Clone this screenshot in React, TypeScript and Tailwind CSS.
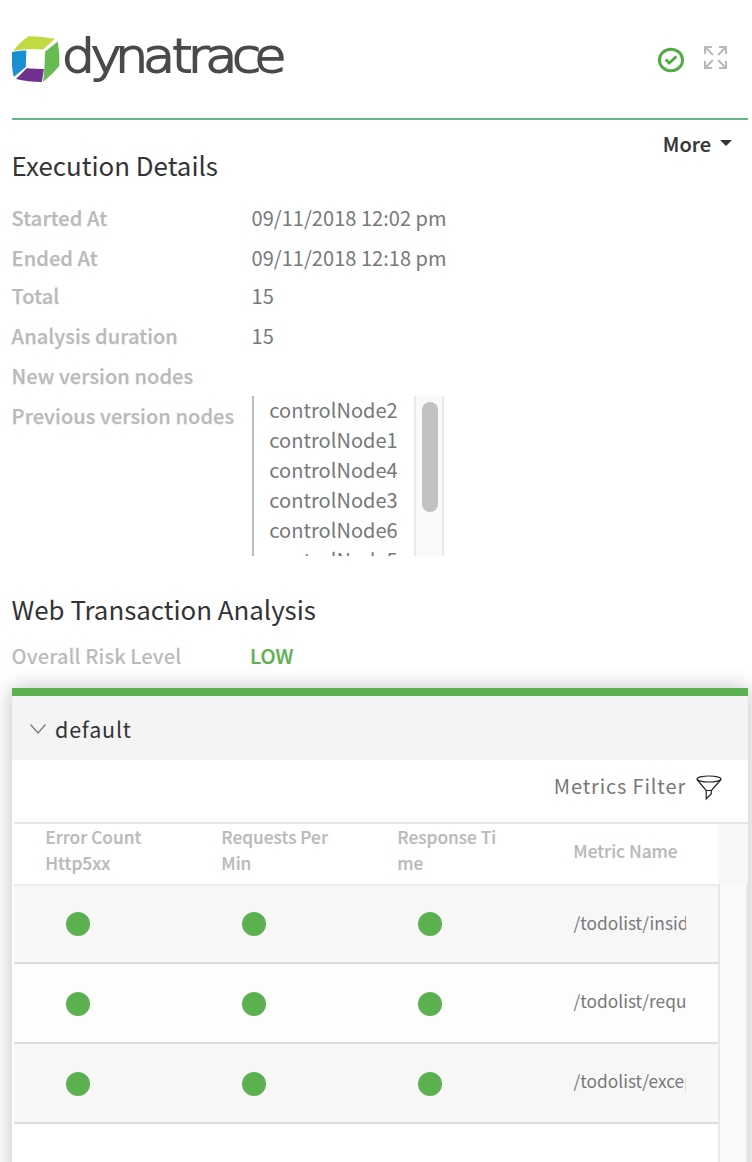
import React from "react";

const nodes = ["controlNode2", "controlNode1", "controlNode4", "controlNode3", "controlNode6", "controlNode5"];

const metrics = [
  { name: "/todolist/inside", height: "h-[78px]", top: "pt-[26px]", textTop: "pt-[23px]", bg: "bg-[#f7f7f7]" },
  { name: "/todolist/request", height: "h-[80px]", top: "pt-[28px]", textTop: "pt-[23px]", bg: "bg-[#fdfdfd]" },
  { name: "/todolist/except", height: "h-[80px]", top: "pt-[28px]", textTop: "pt-[23px]", bg: "bg-[#f7f7f7]" },
];

function Logo() {
  return (
    <svg width="280" height="62" viewBox="0 0 280 62" className="block" aria-label="dynatrace">
      <path d="M16.5 8.3Q29 8 43 10.8L31 21.6Q15 20 1.3 22.8Q8 14 16.5 8.3Z" fill="#c3d941" />
      <path d="M0 24Q7 22 14.3 22.5L13.8 39L1.8 49Q-1 37 0 24Z" fill="#1a90d2" />
      <path d="M45.8 13.5Q48 26 47.3 38Q40 47 31.2 53.7Q32.8 38 33.2 23.4Z" fill="#66bc50" />
      <path d="M14.7 40.3Q23 41 31.9 41L29.9 54Q16 54 4 51Z" fill="#70308f" />
      <text
        transform="scale(1.12 1)"
        x="44.5 70.1 91.9 117 142.6 157 172.6 196.4 216.2"
        y="44.1"
        fill="#4a4a4c"
        stroke="#4a4a4c"
        strokeWidth="1.9"
        className="font-['DejaVu_Sans',sans-serif] text-[47px] font-extralight"
      >
        dynatrace
      </text>
    </svg>
  );
}

function Field({ label, children, height = "h-[40px]" }: { label: string; children?: React.ReactNode; height?: string }) {
  return (
    <div className={`flex items-start text-[20px] leading-[40px] ${height}`}>
      <div className="w-[240px] shrink-0 whitespace-nowrap font-medium tracking-[0.08px] text-[#b9babb] [-webkit-text-stroke:0.25px_#b9babb] -indent-[0.4px]">{label}</div>
      <div className="whitespace-nowrap tracking-[0.03px] text-[#77787a] -indent-[0.4px]">{children}</div>
    </div>
  );
}

function Dot() {
  return (
    <div className="w-[176px] pl-[52px]">
      <div className="size-6 rounded-full bg-[#5bb04f]" />
    </div>
  );
}

export default function App() {
  return (
    <div className="h-[1162px] w-[752px] overflow-hidden bg-white pl-3 pr-1 font-['Noto_Sans_CJK_SC',sans-serif] text-[#333436]">
      <header className="flex h-[120px] items-start justify-between border-b-2 border-[#63b688] pt-[28px]">
        <Logo />
        <div className="flex items-center gap-[19px] pr-[21px] pt-[17px]">
          <svg width="28" height="28" viewBox="0 0 28 28" fill="none" stroke="#51ac43">
            <ellipse cx="14" cy="15" rx="11.6" ry="10.7" strokeWidth="3" />
            <path d="M8.7 14.5L12.2 18L19.4 11.5" strokeWidth="2.9" />
          </svg>
          <svg width="23" height="24" viewBox="0 0 23 24" fill="none" stroke="#b8b9bb" strokeWidth="2" className="mt-[-5px]">
            <path d="M1 9V2H8M1.5 2.5L9 10M15 2H22V9M21.5 2.5L14 10M1 16V23H8M1.5 22.5L9 15M22 16V23H15M21.5 22.5L14 15" />
          </svg>
        </div>
      </header>

      <div className="flex h-[78px] justify-between">
        <h2 className="pt-[25px] text-[25.9px] leading-[40px] -indent-[0.4px]">Execution Details</h2>
        <div className="flex h-10 items-center gap-[9px] pr-4 pt-[7px] text-[20px] font-medium leading-[40px]">
          <span className="[-webkit-text-stroke:0.2px_#333436]">More</span>
          <svg width="12" height="6" viewBox="0 0 12 6" className="-mt-0.5">
            <path d="M0 0H12L6 6Z" fill="#333436" />
          </svg>
        </div>
      </div>

      <section className="h-[382px]">
        <Field label="Started At">09/11/2018 12:02 pm</Field>
        <Field label="Ended At" height="h-[38px]">09/11/2018 12:18 pm</Field>
        <Field label="Total">15</Field>
        <Field label="Analysis duration">15</Field>
        <Field label="New version nodes" />
        <Field label="Previous version nodes">
          <div className="flex h-[160px] w-[192px] overflow-hidden border-l-2 border-[#bbbcbd]">
            <ul className="-mt-px w-[160px] pl-[15.7px] leading-[30px]">
              {nodes.map((n) => (
                <li key={n}>{n}</li>
              ))}
            </ul>
            <div className="w-[30px] shrink-0 border-x-2 border-[#e8e8e8] bg-[#fafafa] pl-[6px] pt-[6px]">
              <div className="h-[110px] w-4 rounded-full bg-[#c1c1c1]" />
            </div>
          </div>
        </Field>
      </section>

      <section>
        <h2 className="h-[56px] pt-[9px] text-[25.85px] leading-[40px] -indent-[0.4px]">Web Transaction Analysis</h2>
        <div className="flex h-[52px] text-[20px] font-medium leading-[40px]">
          <div className="w-[238px] tracking-[0.12px] text-[#b9babb] -indent-[0.4px]">Overall Risk Level</div>
          <div className="text-[#5bb04f] [-webkit-text-stroke:0.2px_#5bb04f]">LOW</div>
        </div>

        <div className="h-[500px] border-t-8 border-[#5bb04f] bg-white shadow-[0_0_20px_rgba(0,0,0,0.25)]">
          <div className="flex h-16 items-center bg-[#f4f4f4] pl-[18px] text-[21.5px] tracking-[0.8px]">
            <svg width="16" height="10" viewBox="0 0 16 10" fill="none" stroke="#77787a" strokeWidth="1.2" className="mr-[9px] mt-[1px]">
              <path d="M0.5 0.5L8 9L15.5 0.5" />
            </svg>
            <span className="pt-0.5 leading-[36px]">default</span>
          </div>
          <div className="ml-0.5 flex h-16 items-start justify-end border-b-2 border-[#e6e6e6] pr-[26px] pt-[6px] text-[20px] leading-[40px] tracking-[0.85px] text-[#77787a]">
            Metrics Filter
            <svg width="26" height="26" viewBox="0 0 26 26" fill="none" stroke="#222" strokeWidth="1.2" className="ml-[10px] mt-[9px]">
              <ellipse cx="13" cy="4" rx="12" ry="3" />
              <path d="M1 4.5L10.2 15.5V23.8L15.3 19V15.5L25 4.5M10.2 15.5H15.3" />
            </svg>
          </div>
          <div className="ml-0.5 flex h-[60px] bg-[#f7f7f7]">
            <div className="flex w-[704px] items-start bg-white pl-[31.3px] text-[17.3px] font-medium leading-[26px] text-[#b9babb] [-webkit-text-stroke:0.2px_#b9babb]">
              <div className="w-[176px] whitespace-nowrap">Error Count<br />Http5xx</div>
              <div className="w-[176px] whitespace-nowrap">Requests Per<br />Min</div>
              <div className="w-[176px] whitespace-nowrap">Response Ti<br />me</div>
              <div className="whitespace-nowrap pt-[14px]">Metric Name</div>
            </div>
          </div>
          <div className="ml-0.5 flex h-[300px]">
            <div className="w-[704px] border-t-2 border-[#ececec] bg-white">
              {metrics.map((m) => (
                <div key={m.name} className={`flex items-start border-b-2 border-[#dcdcdc] ${m.height} ${m.bg}`}>
                  <div className={`flex ${m.top}`}>
                    <Dot />
                    <Dot />
                    <Dot />
                  </div>
                  <div className={`ml-[31px] ${m.textTop}`}>
                    <div className="w-[113px] overflow-hidden whitespace-nowrap text-[17.3px] leading-[28px] text-[#77787a] indent-[0.4px]">{m.name}</div>
                  </div>
                </div>
              ))}
            </div>
            <div className="flex-1 border-x-2 border-[#e8e8e8] bg-[#fafafa]" />
          </div>
        </div>
      </section>
    </div>
  );
}
